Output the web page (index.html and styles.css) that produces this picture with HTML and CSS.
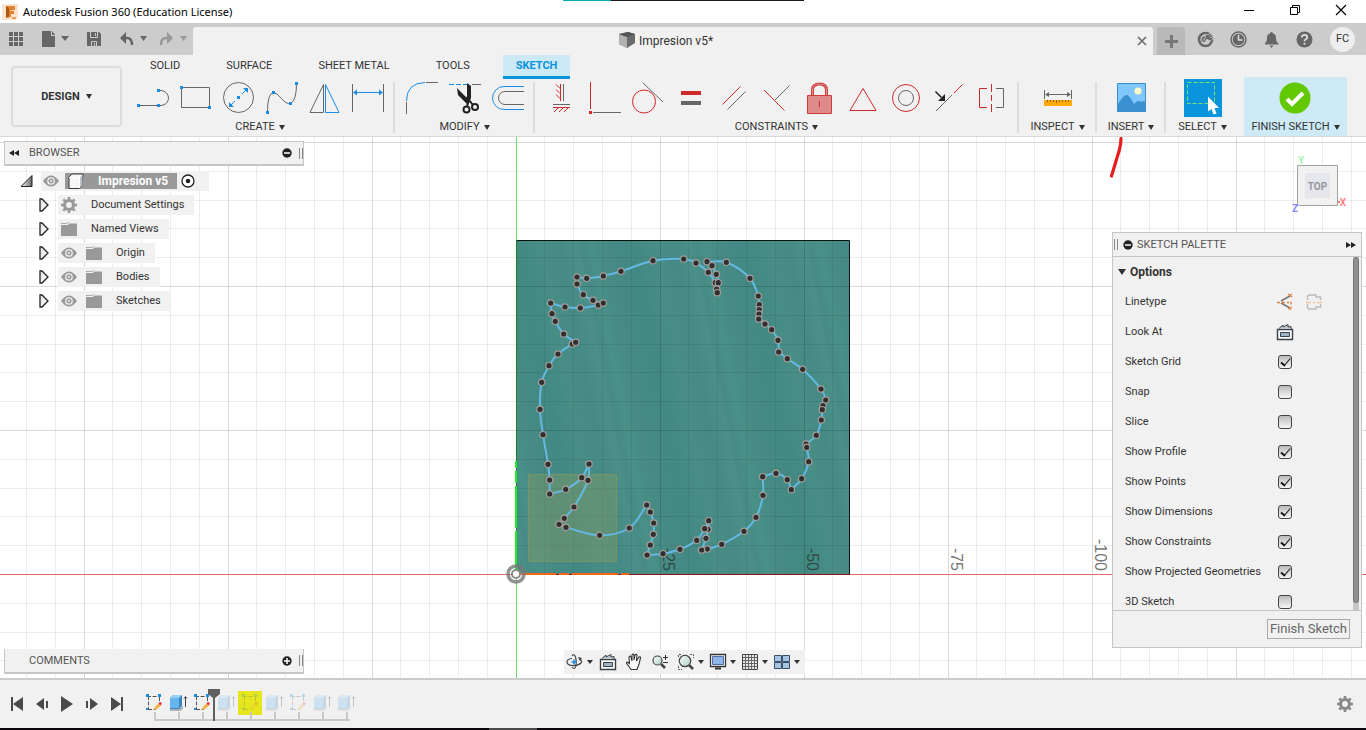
FILE: index.html
```html
<!DOCTYPE html>
<html lang="en">
<head>
<meta charset="utf-8">
<title>Autodesk Fusion 360 (Education License)</title>
<link rel="stylesheet" href="styles.css">
</head>
<body>
<svg class="defs" aria-hidden="true">
  <defs>
    <linearGradient id="lens" x1="0" y1="0" x2="1" y2="1"><stop offset="0" stop-color="#fff"/><stop offset="1" stop-color="#a9cdbf"/></linearGradient>
    <linearGradient id="expander" x1="0" y1="0" x2="1" y2="0"><stop offset="0" stop-color="#fff"/><stop offset="1" stop-color="#666"/></linearGradient>
  </defs>
  <symbol id="eye" viewBox="0 0 16 16"><path d="M0 8Q8-3 16 8Q8 19 0 8Z" fill="#999"/><circle cx="8" cy="8" r="3.200" fill="none" stroke="#f1f1f1" stroke-width="1.300"/><circle cx="8" cy="8" r="1" fill="#f1f1f1"/></symbol>
  <symbol id="folder" viewBox="0 0 16 16"><path d="M0 2.500h5.500l2.500-1" fill="none" stroke="#aaa"/><path d="M0 4h7l1.500-1.500H16V15H0Z" fill="#999"/></symbol>
  <symbol id="closed" viewBox="0 0 12 14"><path d="M2 1h2l6 6-6 6H2Z" fill="#eee" stroke="#222" stroke-width="1.300"/></symbol>
  <symbol id="gear" viewBox="0 0 16 16"><circle cx="8" cy="8" r="4.500" fill="none" stroke="currentColor" stroke-width="3.200"/><path d="M8 0v3M8 13v3M0 8h3M13 8h3M2.300 2.300l2.200 2.200M11.500 11.500l2.200 2.200M13.700 2.300l-2.200 2.200M4.500 11.500l-2.200 2.200" stroke="currentColor" stroke-width="2.600"/></symbol>
  <symbol id="lookat" viewBox="0 0 18 18"><path d="M1.500 6.500h15v10h-15Z" fill="#fff" stroke="#38414a" stroke-width="1.400"/><path d="M4.500 9.500h9v4h-9Z" fill="#9eb4c6" stroke="#38414a"/><path d="M3 5.500 7 2v2l5-2.500V4l3-.5V6" fill="#bfc8cf" stroke="#38414a"/></symbol>
  <symbol id="tl-sketch" viewBox="0 0 20 20"><path d="M4.500 3v13M4 16.500h8M3 3.500h12M15.500 4v6" fill="none" stroke="#555" stroke-dasharray="4 1.500"/><path d="M2 1h3v3H2zM14 1h3v3h-3zM2 15h2v2H2z" fill="#1a8ce0"/><path d="m10 17 1-3 4-4 2.200 2-4.200 4Z" fill="#f4b042"/><path d="m14.500 10.500 2-1.500 1.500 1.500-1.500 2Z" fill="#e34"/></symbol>
  <symbol id="tl-solid" viewBox="0 0 20 20"><path d="m2 15 10 0 3-2v3l-3 2H2Z" fill="#aab0b5"/><path d="m2 5 3-3h9v11l-3 3H2Z" fill="#3b87bd"/><path d="M2 5h9v10H2Z" fill="#66b5ee"/><path d="m2 5 3-3h9l-3 3Z" fill="#9ad2f7"/><path d="M17.500 14V4m-1.500 1.500 1.500-2 1.500 2" fill="none" stroke="#444"/></symbol>
</svg>

<header class="titlebar">
  <svg class="logo" width="16" height="16" viewBox="0 0 16 16"><path d="M0 0h16v14l-4 2H0Z" fill="#fbe3cd"/><path d="M4 2h9v4H9v1h3v3H9v3l-4 1Z" fill="#e7812b"/><path d="m4 2 3 2v8l-3 2Z" fill="#a9581c"/><path d="M10 14h4" stroke="#e7a05f" stroke-width="2"/></svg>
  <h1>Autodesk Fusion 360 (Education License)</h1>
  <div class="window-buttons">
    <button aria-label="Minimize"><svg width="12" height="12" viewBox="0 0 12 12"><path d="M1 6.500h10" stroke="#000"/></svg></button>
    <button aria-label="Restore"><svg width="12" height="12" viewBox="0 0 12 12"><path d="M1.500 3.500h7v7h-7zM3.500 3V1.500h7v7H9" fill="none" stroke="#000"/></svg></button>
    <button aria-label="Close"><svg width="12" height="12" viewBox="0 0 12 12"><path d="m1 1 10 10M11 1 1 11" stroke="#000" stroke-width="1.200"/></svg></button>
  </div>
  <div class="top-strip"></div>
</header>

<div class="appbar">
  <div class="quick">
    <button aria-label="Data panel"><svg width="14" height="14" viewBox="0 0 14 14" fill="#666"><path d="M0 0h4v4H0zM5 0h4v4H5zM10 0h4v4h-4zM0 5h4v4H0zM5 5h4v4H5zM10 5h4v4h-4zM0 10h4v4H0zM5 10h4v4H5zM10 10h4v4h-4z"/></svg></button>
    <button class="q-file" aria-label="File"><svg width="28" height="16" viewBox="0 0 28 16" fill="#666"><path d="M0 0h9v5h4v11H0zM10 0l3 4h-3zM19 5h8l-4 5z"/></svg></button>
    <button class="q-save" aria-label="Save"><svg width="14" height="14" viewBox="0 0 14 14"><path d="M0 0h12l2 2v12H0z" fill="#666"/><path d="M3.500 0v5.500h7V0M4.500 14V9.500h5V14" fill="none" stroke="#ccc"/><path d="M8.500 1v3M7.500 11v3" stroke="#ccc"/></svg></button>
    <button class="q-undo" aria-label="Undo"><svg width="28" height="14" viewBox="0 0 28 14"><path d="M1 6h6q5 0 5 7" fill="none" stroke="#666" stroke-width="2.400"/><path d="M0 6 6 0v12zM20 4h7l-3.500 5z" fill="#666"/></svg></button>
    <button class="q-redo" aria-label="Redo"><svg width="28" height="14" viewBox="0 0 28 14"><path d="M12 6H6Q1 6 1 13" fill="none" stroke="#999" stroke-width="2.400"/><path d="M13 6 7 0v12zM20 4h7l-3.500 5z" fill="#999"/></svg></button>
  </div>
  <div class="doc-tab">
    <svg width="16" height="16" viewBox="0 0 16 16"><path d="m0 2 9-2 7 2v9l-8 5-8-4Z" fill="#6b6b6b"/><path d="m0 2 8 3v11l-8-4Z" fill="#b2b2b2"/><path d="m0 2 9-2 7 2-8 3Z" fill="#555"/></svg>
    <span>Impresion v5*</span>
    <button class="doc-close" aria-label="Close document"><svg width="10" height="10" viewBox="0 0 10 10"><path d="m1 1 8 8M9 1 1 9" stroke="#666" stroke-width="1.500"/></svg></button>
  </div>
  <button class="new-tab" aria-label="New design"><svg width="13" height="13" viewBox="0 0 13 13"><path d="M6.500 0v13M0 6.500h13" stroke="#777" stroke-width="3"/></svg></button>
  <div class="account">
    <button aria-label="Extensions"><svg width="17" height="17" viewBox="0 0 17 17"><circle cx="8.500" cy="8.500" r="6.500" fill="none" stroke="#666" stroke-width="2.600"/><path d="M5.500 11V8q0-1.500 1.500-1.500h2" fill="none" stroke="#666" stroke-width="1.800"/><path d="m8 3 3 1 2-2 1.500 1-2 2.500L14 7l2-2v3l-3 2-3-2-3 4-1.500-1.500L8.500 7z" fill="#666" stroke="#ccc" stroke-width=".7"/></svg></button>
    <button aria-label="Job status"><svg width="17" height="17" viewBox="0 0 17 17"><circle cx="8.500" cy="8.500" r="7.500" fill="none" stroke="#666" stroke-width="1.500"/><circle cx="8.500" cy="8.500" r="5.800" fill="#666"/><path d="M8.500 4v5h4" fill="none" stroke="#ddd" stroke-width="1.500"/></svg></button>
    <button aria-label="Notifications"><svg width="17" height="17" viewBox="0 0 17 17"><path d="M8.500 1q1.500 0 1.500 1.500Q13 3 13 7q0 4 2.500 5.500v1H2v-1Q4 11 4 7q0-4 3-4.500Q7 1 8.500 1ZM6.500 14.500h4L8.500 17z" fill="#666"/></svg></button>
    <button aria-label="Help"><svg width="17" height="17" viewBox="0 0 17 17"><circle cx="8.500" cy="8.500" r="8" fill="#666"/><path d="M5.800 6.500q0-2.700 2.700-2.700t2.700 2.400q0 1.300-1.400 2t-1.300 2" fill="none" stroke="#ddd" stroke-width="1.800"/><path d="M7.600 11.800h1.900v1.900H7.600z" fill="#ddd"/></svg></button>
    <button class="avatar">FC</button>
  </div>
</div>

<section class="ribbon" aria-label="Toolbar">
  <button class="workspace">DESIGN <i class="caret"></i></button>
  <div class="ribbon-main">
    <nav class="tabs">
      <button>SOLID</button><button>SURFACE</button><button>SHEET METAL</button><button>TOOLS</button><button class="active">SKETCH</button>
    </nav>
    <div class="groups">
      <div class="group">
        <div class="tools">
          <button aria-label="Line"><svg viewBox="131 79 43 38"><path d="M138 105.500h23a7.500 7.500 0 0 0 0-15h-3" class="g"/><path d="M137 104h3v3h-3zM157 104h3v3h-3zM157 89h3v3h-3z" fill="#1a8ce6"/></svg></button>
          <button aria-label="Rectangle"><svg viewBox="174 79 43 38"><path d="M181.500 87.500h28v20h-28z" class="g"/><path d="M180 86h3v3h-3zM208 106h3v3h-3z" fill="#1a8ce6"/></svg></button>
          <button aria-label="Circle"><svg viewBox="217 79 43 38"><circle cx="238.500" cy="97.500" r="15" class="g"/><path d="m230 106 5-5m7-7 5-5" class="b"/><path d="M237 96h3v3h-3zM248 88v5l-5-5zM229 107v-5l5 5z" fill="#1a8ce6"/></svg></button>
          <button aria-label="Spline"><svg viewBox="260 79 43 38"><path d="M267.500 112q0-19 6-19.500 3 0 8 6 5 6 9 5 6-3 6-20" class="g"/><path d="M266 111h3v3h-3zM272 91h3v3h-3zM289 102h3v3h-3zM295 82h3v3h-3z" fill="#1a8ce6"/></svg></button>
          <button aria-label="Mirror"><svg viewBox="303 79 43 38"><path d="M323.500 84.500v28h-13.500z" class="g"/><path d="M325.500 84.500v28H339z" class="b"/></svg></button>
          <button aria-label="Sketch dimension"><svg viewBox="346 79 43 38"><path d="M352.500 84v28M383.500 84v28" class="g"/><path d="M354 92.500h28" class="b"/><path d="m353 92.500 4-3v6zM383 92.500l-4-3v6z" fill="#1a8ce6"/></svg></button>
        </div>
        <button class="group-name">CREATE <i class="caret"></i></button>
      </div>
      <div class="group">
        <div class="tools">
          <button aria-label="Fillet"><svg viewBox="400 79 43 38"><path d="M406.500 101q0-18 18.500-18.500" class="b"/><path d="M426 82.500h12M406.500 102v12" class="g"/></svg></button>
          <button aria-label="Trim"><svg viewBox="443 79 43 38"><path d="M449 84.500h5m2 0h5m2 0h5" class="b"/><path d="M472 84.500h9" class="g"/><path d="m457 88 13 13-2 4-10-10zM467 83l4 3v12l-3 7-3-3 2-6z" fill="#222"/><g fill="none" stroke="#222" stroke-width="2"><circle cx="466.500" cy="109.500" r="3"/><circle cx="475" cy="107" r="3"/><path d="m467 106 2-6 4 5"/></g></svg></button>
          <button aria-label="Offset"><svg viewBox="486 79 43 38"><path d="M524 86.500h-20a11.500 11.500 0 0 0 0 23h20" class="b"/><path d="M524 91.500h-19a6.500 6.500 0 0 0 0 13h19" class="g"/></svg></button>
        </div>
        <button class="group-name">MODIFY <i class="caret"></i></button>
      </div>
      <div class="group">
        <div class="tools">
          <button aria-label="Horizontal/Vertical"><svg viewBox="540 79 43 38"><path d="M560.500 84v17M553 107.500h17M556 84.500l4 4M556 89.500l4 4M556 94.500l4 4M554 112l4-4M559 112l4-4M564 112l4-4" class="r"/><path d="M563.500 84v17M553 104.500h17" class="g"/></svg></button>
          <button aria-label="Coincident"><svg viewBox="583 79 43 38"><path d="M590.500 82v27" class="r"/><path d="M589 111h3v3h-3z" fill="#cf2a2a"/><path d="M593 112.500h28" class="g"/></svg></button>
          <button aria-label="Tangent"><svg viewBox="626 79 43 38"><circle cx="644" cy="101.500" r="11.500" class="r"/><path d="m643 83 20 19" class="g"/></svg></button>
          <button aria-label="Equal"><svg viewBox="669 79 43 38"><path d="M681 91h20v4h-20z" fill="#cf2a2a"/><path d="M681 101h20v4h-20z" fill="#666"/></svg></button>
          <button aria-label="Parallel"><svg viewBox="712 79 43 38"><path d="m722.500 104.500 18-18" class="r"/><path d="m727.500 109.500 18-18" class="g"/></svg></button>
          <button aria-label="Perpendicular"><svg viewBox="755 79 43 38"><path d="m764 90 20.500 20.500" class="r"/><path d="m775 100 14.500-14.500" class="g"/></svg></button>
          <button aria-label="Fix"><svg viewBox="798 79 43 38"><path d="M812.500 95v-5q0-6 7-6t7 6v5" fill="none" stroke="#cf3a3a" stroke-width="3"/><path d="M812.500 95v-5q0-6 7-6t7 6v5" fill="none" stroke="#e39494"/><path d="M807.500 95.500h24v18h-24z" fill="#e08b8b" stroke="#cf3a3a"/><path d="M819.500 101v6" class="r"/></svg></button>
          <button aria-label="Polygon"><svg viewBox="841 79 43 38"><path d="m863 88.500 13 22h-26z" class="r"/></svg></button>
          <button aria-label="Concentric"><svg viewBox="884 79 43 38"><circle cx="906" cy="98" r="13.500" class="r"/><circle cx="906" cy="98" r="7.500" class="g"/></svg></button>
          <button aria-label="Midpoint"><svg viewBox="927 79 43 38"><path d="m936 111 16-16" class="g"/><path d="m954 93 8.500-8.500" class="r"/><path d="m935.500 91.500 6 6" stroke="#222" stroke-width="1.500"/><path d="M945 101v-7l-7 7z" fill="#222"/></svg></button>
          <button aria-label="Symmetry"><svg viewBox="970 79 43 38"><path d="M987 88.500h-7.500v19h7.500M991.500 84v8m0 3v6m0 3v8" class="r"/><path d="M996 88.500h7.500v19H996" class="g"/></svg></button>
        </div>
        <button class="group-name">CONSTRAINTS <i class="caret"></i></button>
      </div>
      <div class="group inspect">
        <div class="tools"><button aria-label="Measure"><svg viewBox="1036 79 43 38"><path d="M1044.500 90v9M1071.500 90v9M1046 94.500h24" class="g"/><path d="m1045 94.500 4-2.500v5zM1071 94.500l-4-2.500v5z" fill="#666"/><path d="M1044 100h28v6h-28z" fill="#ffa90a"/><path d="M1047.500 100v2m3-2v2m3-2v2m3-2v3m3-3v2m3-2v2m3-2v2m3-2v2" stroke="#955e00"/></svg></button></div>
        <button class="group-name">INSPECT <i class="caret"></i></button>
      </div>
      <div class="group insert">
        <div class="tools"><button aria-label="Insert image"><svg viewBox="1110 79 43 38"><path d="M1117.500 83.500h28v28h-28z" fill="#80c7ff" stroke="#398fce"/><circle cx="1138" cy="91" r="3.500" fill="#fffbc6"/><path d="M1118 104q6-10 9-9 3 1 7 9 4-5 7-2 3-2 4 0v9h-27z" fill="#3b91cf"/></svg></button></div>
        <button class="group-name">INSERT <i class="caret"></i></button>
      </div>
      <div class="group select">
        <div class="tools"><button aria-label="Select"><svg viewBox="1182 79 43 38"><path d="M1185 79h38v38h-38z" fill="#0a94dc"/><path d="M1188.500 82.500h27v21h-27z" fill="none" stroke="#78e36e" stroke-dasharray="4 2"/><path d="M1209 96.500v15l3.500-2.500 2 5.500 3-1-2-5.500h4.500z" fill="#fff"/></svg></button></div>
        <button class="group-name">SELECT <i class="caret"></i></button>
      </div>
      <div class="group finish">
        <div class="tools"><button aria-label="Finish sketch"><svg viewBox="1273 79 43 38"><circle cx="1294" cy="98" r="15.500" fill="#62c802"/><path d="m1286 99 5 5 11-11" fill="none" stroke="#fff" stroke-width="4"/></svg></button></div>
        <button class="group-name">FINISH SKETCH <i class="caret"></i></button>
      </div>
    </div>
  </div>
</section>

<main class="canvas">
  <svg class="scene" role="img" aria-label="Sketch canvas">
    <defs>
      <pattern id="minor" patternUnits="userSpaceOnUse" x="84" y="142" width="144" height="144"><path d="M28.500 0v144M57.500 0v144M86.500 0v144M115.500 0v144M0 29.500h144M0 58.500h144M0 86.500h144M0 115.500h144" stroke="#000" stroke-opacity=".07"/></pattern>
      <pattern id="major" patternUnits="userSpaceOnUse" x="84" y="142" width="144" height="144"><path d="M.5 0v144M0 .5h144" stroke="#000" stroke-opacity=".15"/></pattern>
      <linearGradient id="sheen" gradientUnits="userSpaceOnUse" x1="530" y1="300" x2="640" y2="279" spreadMethod="repeat">
        <stop offset="0" stop-color="#438983"/><stop offset=".2" stop-color="#488e87"/><stop offset=".35" stop-color="#458a84"/><stop offset=".5" stop-color="#4a9089"/><stop offset=".55" stop-color="#468b85"/><stop offset=".62" stop-color="#499088"/><stop offset=".8" stop-color="#458a84"/><stop offset="1" stop-color="#438983"/>
      </linearGradient>
    </defs>
    <g transform="translate(0 -137)">
      <path d="M516.500 240.500h333v334h-333z" fill="url(#sheen)"/>
      <rect y="137" width="100%" height="100%" fill="url(#minor)"/>
      <rect y="137" width="100%" height="100%" fill="url(#major)"/>
      <path d="M528.500 474.500h88v87h-88z" fill="#8c9a5e" fill-opacity=".38" stroke="#9a9a5c" stroke-opacity=".5"/>
      <g class="ruler">
        <text transform="translate(663 571) rotate(90)">-25</text><text transform="translate(807 571) rotate(90)">-50</text>
        <text transform="translate(951 571) rotate(90)">-75</text><text transform="translate(1095 571) rotate(90)">-100</text>
      </g>
      <path d="M516.500 240.500h333v334" fill="none" stroke="#111"/>
      <path d="M0 574.500h516M850 574.500h5000" stroke="#e26a6a"/><path d="M516 574.500h334" stroke="#8b1515"/>
      <path d="M516.500 137v103M516.500 575v5000" stroke="#72dc72"/><path d="M516.500 240v334" stroke="#1b7f23"/>
      <path d="M516 461v113" stroke="#1df01d" stroke-width="2" stroke-dasharray="7 3 12 3 42 3 60"/><path d="M516 574h114" stroke="#f2651c" stroke-width="2" stroke-dasharray="40 3 10 3 46 3 8 3"/>
      <circle cx="516" cy="574" r="8" fill="none" stroke="#777" stroke-width="3.500" opacity=".8"/><circle cx="516" cy="574" r="4" fill="#fff" stroke="#888" stroke-width="2"/>
      <path id="outline" fill="none" stroke="#63b9e2" stroke-width="2"/>
      <g id="points" fill="#302f30" stroke="#a8a09d" stroke-width="1.200"></g>
      <path d="M1121 138.500q0 5-1.500 11l-8 26.500" fill="none" stroke="#e81c1c" stroke-width="3.200" stroke-linecap="round"/>
    </g>
  </svg>

  <aside class="browser">
    <div class="bar browser-bar">
      <svg width="12" height="8" viewBox="0 0 12 8"><path d="M6 1v6L1 4zM11 1v6L6 4z" fill="#222"/></svg>
      <span>BROWSER</span>
      <button aria-label="Collapse browser"><svg width="10" height="10" viewBox="0 0 10 10"><circle cx="5" cy="5" r="4.700" fill="#222"/><path d="M2 5h6" stroke="#fff" stroke-width="1.500"/></svg></button>
      <i class="grip"></i>
    </div>
    <ul class="tree">
      <li class="root"><svg width="12" height="12" viewBox="0 0 12 12"><path d="M11 .5v11H0z" fill="url(#expander)" stroke="#222"/></svg>
        <div class="node"><svg width="16" height="16"><use href="#eye"/></svg><span class="root-name"><svg width="16" height="16" viewBox="0 0 16 16"><path d="m1 4 3-3h11l-1 12-3 2.500H1z" fill="#f6f7f9" stroke="#3a3a3a"/><path d="M11.500 5 14.500 1.500v11L11.500 15z" fill="#b8bfc6"/><path d="M1 4.500h10.500V15" fill="none" stroke="#fff"/></svg>Impresion v5</span>
        <svg width="14" height="14" viewBox="0 0 14 14"><circle cx="7" cy="7" r="6" fill="#fff" stroke="#222" stroke-width="1.300"/><circle cx="7" cy="7" r="2.300" fill="#222"/></svg></div></li>
      <li><svg width="12" height="14"><use href="#closed"/></svg><div class="node"><svg class="grey" width="16" height="16"><use href="#gear"/></svg><span>Document Settings</span></div></li>
      <li><svg width="12" height="14"><use href="#closed"/></svg><div class="node"><svg width="16" height="16"><use href="#folder"/></svg><span>Named Views</span></div></li>
      <li><svg width="12" height="14"><use href="#closed"/></svg><div class="node"><svg width="16" height="16"><use href="#eye"/></svg><svg class="second" width="16" height="16"><use href="#folder"/></svg><span>Origin</span></div></li>
      <li><svg width="12" height="14"><use href="#closed"/></svg><div class="node"><svg width="16" height="16"><use href="#eye"/></svg><svg class="second" width="16" height="16"><use href="#folder"/></svg><span>Bodies</span></div></li>
      <li><svg width="12" height="14"><use href="#closed"/></svg><div class="node"><svg width="16" height="16"><use href="#eye"/></svg><svg class="second" width="16" height="16"><use href="#folder"/></svg><span>Sketches</span></div></li>
    </ul>
  </aside>

  <div class="viewcube"><svg width="64" height="64" viewBox="1290 152 64 64"><path d="M1297.500 165.500h40v40h-40z" fill="#f1f1f1" stroke="#a2a2a2"/><path d="M1305 173h25v25h-25z" fill="#e6e7ec"/><path d="M1338 202h2" stroke="#f77" stroke-width="2"/><g class="cube-text"><text x="1317.500" y="190" fill="#95979d">TOP</text><text x="1301" y="164" fill="#a5f5a5">Y</text><text x="1343" y="206" fill="#f88">X</text><text x="1295" y="212" fill="#88f">Z</text></g></svg></div>

  <aside class="palette">
    <div class="bar palette-bar">
      <i class="grip"></i>
      <button aria-label="Collapse palette"><svg width="10" height="10" viewBox="0 0 10 10"><circle cx="5" cy="5" r="4.700" fill="#222"/><path d="M2 5h6" stroke="#fff" stroke-width="1.500"/></svg></button>
      <span>SKETCH PALETTE</span>
      <svg width="12" height="8" viewBox="0 0 12 8"><path d="M1 1v6l5-3zM6 1v6l5-3z" fill="#222"/></svg>
    </div>
    <div class="palette-body">
      <div class="options">
        <h2><i class="caret"></i>Options</h2>
        <div class="row"><span>Linetype</span><div class="cell"><button aria-label="Construction"><svg width="18" height="18" viewBox="0 0 18 18"><path d="m14 3-9 5M5 10l9 5" fill="none" stroke="#777" stroke-width="1.500"/><path d="M1 9.500h3m2 0h3m2 0h2m2-1v3M12 1l4 3m0-3-3 2M12 16l4-2m-1 3-2-3" stroke="#e4813c" stroke-width="1.300"/></svg></button><button aria-label="Centerline"><svg width="18" height="18" viewBox="0 0 18 18"><path d="M2.500 7V4q0-2 2-2H11v2h4.500v3M2.500 11v3q0 2 2 2H11v-2h4.500v-3" fill="none" stroke="#bbb" stroke-width="1.400"/><path d="M1 9.500h5m2 0h2m2 0h5" stroke="#f4c49c" stroke-width="1.300"/></svg></button></div></div>
        <div class="row"><span>Look At</span><div class="cell"><button aria-label="Look At"><svg width="18" height="18"><use href="#lookat"/></svg></button></div></div>
        <label class="row"><span>Sketch Grid</span><input type="checkbox" checked></label>
        <label class="row"><span>Snap</span><input type="checkbox"></label>
        <label class="row"><span>Slice</span><input type="checkbox"></label>
        <label class="row"><span>Show Profile</span><input type="checkbox" checked></label>
        <label class="row"><span>Show Points</span><input type="checkbox" checked></label>
        <label class="row"><span>Show Dimensions</span><input type="checkbox" checked></label>
        <label class="row"><span>Show Constraints</span><input type="checkbox" checked></label>
        <label class="row"><span>Show Projected Geometries</span><input type="checkbox" checked></label>
        <label class="row"><span>3D Sketch</span><input type="checkbox"></label>
      </div>
      <div class="track"><div class="thumb"></div></div>
    </div>
    <div class="palette-foot"><button>Finish Sketch</button></div>
  </aside>

  <div class="bar comments">
    <span>COMMENTS</span>
    <button aria-label="Expand comments"><svg width="10" height="10" viewBox="0 0 10 10"><circle cx="5" cy="5" r="4.700" fill="#222"/><path d="M2 5h6M5 2v6" stroke="#fff" stroke-width="1.500"/></svg></button>
    <i class="grip"></i>
  </div>

  <div class="navbar">
    <button class="menu" aria-label="Orbit"><svg width="18" height="18" viewBox="0 0 18 18"><path d="M6 3q2-3 3.500 1 1.500 6 0 10-1.500 3-3.500 0" fill="none" stroke="#444" stroke-width="1.200"/><path d="M13 6q4 2 2 4-3 3-9 2.500Q1 12 1 9q0-3 5-3.500" fill="none" stroke="#444" stroke-width="1.200"/><path d="M8 6.500v5M5.500 9h5" stroke="#1a8ce6" stroke-width="1.600"/><path d="m12 4 4 1-2 3z" fill="#444"/></svg><i class="caret"></i></button>
    <button aria-label="Look at"><svg width="18" height="18"><use href="#lookat"/></svg></button>
    <button aria-label="Pan"><svg width="18" height="18" viewBox="0 0 18 18"><path d="M6 16.500 1.500 10q0-2 3 .5L4 4q1-2 2 0l1 4V2q1-2 2 0v5l1-5q1.500-1.500 2 0L11.500 8 14 4q2-.5 1.500 1L14 11l-2 5.500z" fill="#fff" stroke="#333" stroke-width="1.100"/></svg></button>
    <button aria-label="Zoom"><svg width="18" height="18" viewBox="0 0 18 18"><circle cx="6.500" cy="7.500" r="4.500" fill="url(#lens)" stroke="#444" stroke-width="1.200"/><path d="m10 11 4 4" stroke="#444" stroke-width="2.500"/><path d="M14.500 2v5M12 4.500h5M12 9.500h5" stroke="#333"/></svg></button>
    <button class="menu wide" aria-label="Fit"><svg width="18" height="18" viewBox="0 0 18 18"><path d="M1.500 4V1.500H4M13 1.500h3.500V5M1.500 13v3.500H5" fill="none" stroke="#555" stroke-dasharray="2 1"/><circle cx="8" cy="8" r="5.700" fill="url(#lens)" stroke="#444" stroke-width="1.200"/><path d="m12 12 4 4" stroke="#444" stroke-width="2.500"/></svg><i class="caret"></i></button>
    <button class="menu" aria-label="Display settings"><svg width="18" height="18" viewBox="0 0 18 18"><path d="M1.500 1.500h15v12h-15z" fill="#fff" stroke="#333" stroke-width="1.300"/><path d="M3.500 3.500h11v8h-11z" fill="#8eb6ea" stroke="#5470a0"/><path d="M6 15.500h6" stroke="#333" stroke-width="2"/></svg><i class="caret"></i></button>
    <button class="menu" aria-label="Grid and snaps"><svg width="18" height="18" viewBox="0 0 18 18"><path d="M1.500 1.500h15v15h-15z" fill="#e7e7e7" stroke="#444"/><path d="M4.500 2v14M7.500 2v14M10.500 2v14M13.500 2v14M2 4.500h14M2 7.500h14M2 10.500h14M2 13.500h14" stroke="#666"/></svg><i class="caret"></i></button>
    <button class="menu" aria-label="Viewports"><svg width="18" height="18" viewBox="0 0 18 18" fill="#a6c5e4" stroke="#3a5068"><path d="M1.500 2.500h7v6h-7zM9.500 2.500h7v6h-7zM1.500 9.500h7v6h-7zM9.500 9.500h7v6h-7z"/></svg><i class="caret"></i></button>
  </div>
</main>

<footer class="timeline">
  <div class="playback">
    <button aria-label="Go to start"><svg width="14" height="14" viewBox="0 0 14 14" fill="#4a4a4a"><path d="M1 0h2v14H1zM13 0v14L3 7z"/></svg></button>
    <button aria-label="Step back"><svg width="14" height="14" viewBox="0 0 14 14" fill="#4a4a4a"><path d="M9 1v12L1 7zM11 4h2v7h-2z"/></svg></button>
    <button aria-label="Play"><svg width="14" height="16" viewBox="0 0 14 16" fill="#4a4a4a"><path d="M1 0v16l12-8z"/></svg></button>
    <button aria-label="Step forward"><svg width="14" height="14" viewBox="0 0 14 14" fill="#4a4a4a"><path d="M5 1v12l8-6zM1 4h2v7H1z"/></svg></button>
    <button aria-label="Go to end"><svg width="14" height="14" viewBox="0 0 14 14" fill="#4a4a4a"><path d="M11 0h2v14h-2zM1 0v14l10-7z"/></svg></button>
  </div>
  <ol class="features">
    <li><svg width="20" height="20"><use href="#tl-sketch"/></svg></li>
    <li><svg width="20" height="20"><use href="#tl-solid"/></svg></li>
    <li class="current"><svg width="20" height="20"><use href="#tl-sketch"/></svg><svg class="marker" width="12" height="32" viewBox="0 0 12 32"><path d="M0 0h12v5L7 9v23H5V9L0 5z" fill="#606060"/></svg></li>
    <li class="off"><svg width="20" height="20"><use href="#tl-solid"/></svg></li>
    <li class="off picked"><svg width="20" height="20"><use href="#tl-sketch"/></svg></li>
    <li class="off"><svg width="20" height="20"><use href="#tl-solid"/></svg></li>
    <li class="off"><svg width="20" height="20"><use href="#tl-sketch"/></svg></li>
    <li class="off"><svg width="20" height="20"><use href="#tl-solid"/></svg></li>
    <li class="off"><svg width="20" height="20"><use href="#tl-solid"/></svg></li>
  </ol>
  <button class="settings" aria-label="Timeline settings"><svg width="16" height="16"><use href="#gear"/></svg></button>
</footer>
<div class="bottom-strip"></div>
<script src="sketch.js"></script>
</body>
</html>
```
FILE: styles.css
```css
* { box-sizing: border-box; }
body { margin: 0; height: 100vh; display: flex; flex-direction: column; overflow: hidden; background: #fff; color: #333; font: 11px/16px Roboto, "Liberation Sans", sans-serif; }
button { margin: 0; padding: 0; border: 0; background: none; color: inherit; font: inherit; display: flex; align-items: center; justify-content: center; }
svg { display: block; flex: none; }
.defs { position: absolute; width: 0; height: 0; }
.caret { display: inline-block; flex: none; border: solid transparent; border-width: 5px 3px 0; border-top-color: #333; }

.titlebar { position: relative; display: flex; align-items: center; height: 23px; padding-left: 2px; gap: 5px; flex: none; }
.titlebar h1 { margin: 0; flex: 1; color: #000; font: 11px/16px "Noto Sans", sans-serif; }
.window-buttons { display: flex; margin-right: 2px; padding-bottom: 3px; }
.window-buttons button { width: 46px; }
.top-strip { position: absolute; top: 0; left: 563px; width: 241px; height: 1px; background: linear-gradient(90deg, #08a9b8 48px, #1b1b1b 48px); }

.appbar { display: flex; align-items: stretch; height: 32px; padding-top: 4px; background: #ccc; flex: none; }
.quick { display: flex; align-items: center; width: 193px; padding: 0 7px 4px 9px; flex: none; }
.q-file { margin-left: 19px; }
.q-save { margin-left: 17px; }
.q-undo { margin-left: 19px; }
.q-redo { margin-left: 12px; }
.doc-tab { flex: 1; display: flex; align-items: center; justify-content: center; gap: 4px; position: relative; padding-right: 14px; background: #f1f1f1; border-radius: 3px 3px 0 0; font-size: 12px; }
.doc-tab > svg { margin-bottom: 2px; }
.doc-close { position: absolute; right: 6px; top: 9px; }
.new-tab { width: 28px; margin-left: 4px; background: #b9b9b9; border-radius: 3px 3px 0 0; }
.account { display: flex; align-items: center; gap: 16px; padding: 0 11px 4px 12px; }
.account .avatar { width: 25px; height: 25px; margin-left: 1px; border-radius: 50%; background: #eee; }

.ribbon { display: flex; height: 82px; padding-left: 11px; background: #f1f1f1; border-bottom: 1px solid #d9d9d9; flex: none; }
.workspace { width: 111px; height: 61px; margin-top: 11px; gap: 6px; border: 2px solid #ddd; border-radius: 4px; font-weight: 700; flex: none; }
.ribbon-main { flex: 1; margin-left: 4px; }
.tabs { display: flex; height: 24px; padding-left: 11px; gap: 20px; }
.tabs button { padding: 1px 13px 0; border-bottom: 3px solid transparent; }
.tabs .active { background: #cce9f6; border-color: #0a94dc; color: #0a94dc; font-weight: 700; }
.groups { display: flex; height: 57px; }
.group { display: flex; flex-direction: column; align-items: center; position: relative; padding: 0 6px 0 5px; }
.group::after { content: ""; position: absolute; right: 0; top: 3px; bottom: 3px; width: 2px; background: #ddd; }
.tools { display: flex; height: 38px; }
.tools svg { width: 43px; height: 38px; }
.group-name { gap: 4px; height: 18px; padding-top: 2px; white-space: nowrap; }
.inspect { width: 78px; }
.insert { width: 69px; }
.select { width: 72px; margin-right: 6px; padding-right: 4px; }
.select::after, .finish::after { display: none; }
.finish { width: 103px; padding: 2px 0 0; margin-top: -2px; background: #cdeaf6; }
.g, .b, .r { fill: none; stroke: #666; }
.b { stroke: #1a8ce6; }
.r { stroke: #cf2a2a; }

.canvas { position: relative; flex: 1; min-height: 0; overflow: hidden; }
.scene { position: absolute; inset: 0; width: 100%; height: 100%; }
.ruler text { font: 16px "Liberation Sans", sans-serif; fill: #222; fill-opacity: .65; text-anchor: end; }
.bar { display: flex; align-items: center; height: 25px; background: #f1f1f1; border: 1px solid #c6c6c6; color: #555; }
.grip { width: 4px; height: 11px; border: solid #888; border-width: 0 1px; }
.browser { position: absolute; left: 4px; top: 4px; width: 300px; }
.browser-bar, .comments { border-bottom-width: 2px; }
.browser-bar { padding-left: 3px; }
.browser-bar span { margin-left: 9px; flex: 1; }
.bar button { margin-right: 7px; }
.tree { margin: 0; padding: 3px 0 0; list-style: none; }
.tree li { display: flex; align-items: center; height: 24px; padding-left: 34px; gap: 8px; }
.tree .root { padding-left: 17px; }
.node { display: flex; align-items: center; height: 20px; padding: 0 10px 0 3px; background: #f1f1f1; }
.node > span { margin-left: 14px; }
.node .second { margin-left: 9px; }
.node .root-name { display: flex; align-items: center; gap: 14px; height: 16px; margin: 0 4px 0 6px; padding: 0 9px 0 3px; background: #999; color: #fff; font-size: 12px; font-weight: 700; }
.root .node { padding: 0 14px 0 2px; }
.grey { color: #999; }
.viewcube { position: absolute; right: 12px; top: 15px; }
.cube-text text { font: 700 10px Roboto, sans-serif; text-anchor: middle; }
.palette { position: absolute; right: 4px; top: 95px; bottom: 30px; width: 250px; display: flex; flex-direction: column; background: #f1f1f1; border: 1px solid #c6c6c6; }
.palette-bar { height: 24px; border-width: 0 0 1px; padding: 0 4px 0 1px; flex: none; }
.palette-bar button { margin: 0 4px 0 5px; }
.palette-bar span { flex: 1; }
.palette-body { flex: 1; display: flex; min-height: 0; border-bottom: 1px solid #c6c6c6; }
.options { flex: 1; overflow: hidden; }
.options h2 { display: flex; align-items: center; gap: 4px; height: 30px; margin: 0; padding-left: 5px; font: 700 12px/16px Roboto, sans-serif; }
.options h2 .caret { border-width: 6px 4px 0; }
.row { display: flex; align-items: center; height: 30px; padding-left: 12px; white-space: nowrap; }
.row span { flex: 1; }
.cell { display: flex; gap: 11px; width: 77px; }
.row input { appearance: none; width: 14px; height: 14px; margin: 0 61px 0 2px; border: 1px solid #444; border-radius: 3px; background: linear-gradient(#bbb, #f6f6f6); display: grid; place-items: center; }
.row input:checked::before { content: ""; width: 4px; height: 8px; margin-bottom: 2px; border: solid #111; border-width: 0 1px 2px 0; transform: rotate(40deg); }
.track { width: 6px; background: #c6c6c6; margin-right: 2px; }
.thumb { height: 98%; background: #909090; border: 1px solid #777; border-radius: 3px; }
.palette-foot { height: 36px; padding: 8px 11px; display: flex; justify-content: flex-end; flex: none; }
.palette-foot button { padding: 0 2px; border: 1px solid #aaa; color: #666; font-size: 13px; }
.comments { position: absolute; left: 4px; bottom: 4px; width: 300px; border-top: 0; }
.comments span { flex: 1; margin-left: 24px; }
.navbar { position: absolute; left: 564px; bottom: 4px; display: flex; align-items: center; height: 24px; padding: 0 5px 0 2px; gap: 8px; background: #f1f1f1; }
.navbar .menu { gap: 3px; }
.navbar .caret { border-width: 4px 3px 0; }
.navbar .menu:first-child { margin-right: -2px; }
.navbar .menu + .menu { margin-left: -3px; }

.timeline { display: flex; align-items: center; height: 50px; padding: 0 13px 0 10px; background: #f1f1f1; border-top: 2px solid #ccc; flex: none; }
.playback { display: flex; gap: 11px; width: 132px; }
.features { display: flex; flex: 1; margin: 0; padding: 0; list-style: none; }
.features li { position: relative; width: 24px; height: 32px; padding: 3px 2px 0; margin-top: 4px; }
.features li::before { content: ""; position: absolute; left: 12px; bottom: 1px; width: 24px; height: 7px; border: solid #c8c8c8; border-width: 0 0 2px 2px; }
.features li:last-child::before { width: 2px; }
.off svg { opacity: .25; }
.features .picked { background: linear-gradient(#e6e61e, #e6e61e) 0 1px / 24px 24px no-repeat; }
.features .marker { position: absolute; left: 18px; top: -1px; z-index: 1; }
.settings { color: #888; }
.bottom-strip { height: 2px; background: linear-gradient(90deg, #08060a 489px, #4a4a4a 489px 537px, #08060a 537px); flex: none; }
```
FILE: sketch.js
```js
// Each run is a smooth spline between two sharp corners of the outline.
const runs = [
  [[707,261.700],[726.300,262.300],[750,278.300],[758.300,296],[759.300,304.700],[759.300,309.700],[759,314],[758.700,319]],
  [[758.700,319],[765,324],[771.700,329.700],[778,340.300],[778.700,352]],
  [[778.700,352],[787.300,358.700],[802.700,369.300],[821,389],[825.700,400],[823,405.700],[822.300,409.700],[821.300,420],[816.300,435.300],[806,444]],
  [[806,444],[806.700,447.300],[808.700,461.700],[801.700,478.700],[791.300,489.700]],
  [[791.300,489.700],[787.300,479.700],[776,473.300],[762.700,476.700]],
  [[762.700,476.700],[763,495.300],[756,517.300],[744,531.300],[721.700,544.300],[707.300,549],[701.700,550]],
  [[701.700,550],[706,538.300],[708,529.300],[708.700,520.700]],
  [[708.700,520.700],[704.700,528.700],[696.700,540.300],[680,549.300],[663,553.700],[647,555]],
  [[647,555],[650.300,545],[653.300,534.300],[653.700,523],[650.300,512],[646.700,505]],
  [[646.700,505],[629.300,528],[599.700,535.300],[566,527.300],[559,524.300]],
  [[559,524.300],[564.300,518.300],[574,507],[588,480.300],[589,464]],
  [[589,464],[581.700,477.700],[565.700,489.300],[549.700,494]],
  [[549.700,494],[549.700,480],[548,464.300],[543,434.700],[540,409.300],[541.700,382.300],[549,365.700],[558,354],[572.300,344],[575.700,342.300]],
  [[575.700,342.300],[563.700,334],[555.300,321.300],[552,313.700],[550.700,303]],
  [[550.700,303],[565,307],[580.300,308],[598.300,305],[603.300,303]],
  [[603.300,303],[593,300.300],[583.300,294.700],[577,284],[577,277]],
  [[577,277],[586.700,278.300],[603.300,276],[621,271.300],[653,260.700],[683.700,259],[696,263],[708.300,272.300],[715.300,282.700],[716.700,289],[717.300,292.700]],
  [[717.300,292.700],[718.300,282.700],[716.300,274.300],[712,265.700],[707,261.700]]
];

function spline(pts) {
  let d = `M${pts[0]}`;
  for (let i = 0; i < pts.length - 1; i++) {
    const a = pts[i - 1] || pts[i], b = pts[i], c = pts[i + 1], e = pts[i + 2] || c;
    const len = Math.hypot(c[0] - b[0], c[1] - b[1]) / 3;
    const tangent = (p, q) => {
      const n = Math.hypot(q[0] - p[0], q[1] - p[1]) || 1;
      return [(q[0] - p[0]) / n * len, (q[1] - p[1]) / n * len];
    };
    const t1 = tangent(a, c), t2 = tangent(b, e);
    d += `C${b[0] + t1[0]} ${b[1] + t1[1]} ${c[0] - t2[0]} ${c[1] - t2[1]} ${c}`;
  }
  return d;
}

document.getElementById("outline").setAttribute("d", runs.map(spline).join(""));
document.getElementById("points").innerHTML = runs.map(run =>
  run.slice(0, -1).map(([x, y]) => `<circle cx="${x}" cy="${y}" r="3.2"/>`).join("")).join("");
```
